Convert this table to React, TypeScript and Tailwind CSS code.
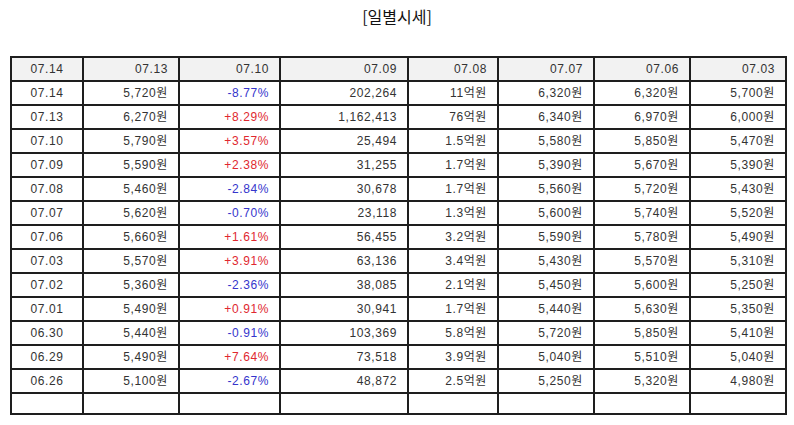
import React from 'react';

type Row = {
  date: string;
  price: string;
  change: string;
  volume: string;
  amount: string;
  open: string;
  high: string;
  low: string;
};

const rows: Row[] = [
  { date: '07.14', price: '5,720원', change: '-8.77%', volume: '202,264', amount: '11억원', open: '6,320원', high: '6,320원', low: '5,700원' },
  { date: '07.13', price: '6,270원', change: '+8.29%', volume: '1,162,413', amount: '76억원', open: '6,340원', high: '6,970원', low: '6,000원' },
  { date: '07.10', price: '5,790원', change: '+3.57%', volume: '25,494', amount: '1.5억원', open: '5,580원', high: '5,850원', low: '5,470원' },
  { date: '07.09', price: '5,590원', change: '+2.38%', volume: '31,255', amount: '1.7억원', open: '5,390원', high: '5,670원', low: '5,390원' },
  { date: '07.08', price: '5,460원', change: '-2.84%', volume: '30,678', amount: '1.7억원', open: '5,560원', high: '5,720원', low: '5,430원' },
  { date: '07.07', price: '5,620원', change: '-0.70%', volume: '23,118', amount: '1.3억원', open: '5,600원', high: '5,740원', low: '5,520원' },
  { date: '07.06', price: '5,660원', change: '+1.61%', volume: '56,455', amount: '3.2억원', open: '5,590원', high: '5,780원', low: '5,490원' },
  { date: '07.03', price: '5,570원', change: '+3.91%', volume: '63,136', amount: '3.4억원', open: '5,430원', high: '5,570원', low: '5,310원' },
  { date: '07.02', price: '5,360원', change: '-2.36%', volume: '38,085', amount: '2.1억원', open: '5,450원', high: '5,600원', low: '5,250원' },
  { date: '07.01', price: '5,490원', change: '+0.91%', volume: '30,941', amount: '1.7억원', open: '5,440원', high: '5,630원', low: '5,350원' },
  { date: '06.30', price: '5,440원', change: '-0.91%', volume: '103,369', amount: '5.8억원', open: '5,720원', high: '5,850원', low: '5,410원' },
  { date: '06.29', price: '5,490원', change: '+7.64%', volume: '73,518', amount: '3.9억원', open: '5,040원', high: '5,510원', low: '5,040원' },
  { date: '06.26', price: '5,100원', change: '-2.67%', volume: '48,872', amount: '2.5억원', open: '5,250원', high: '5,320원', low: '4,980원' },
];

const headers = ['07.14', '07.13', '07.10', '07.09', '07.08', '07.07', '07.06', '07.03'];
const widths = ['w-[72px]', 'w-[96px]', 'w-[101px]', 'w-[128px]', 'w-[90px]', 'w-[96px]', 'w-[96px]', 'w-[96px]'];

const edge = 'border-2 border-[#1e1e1e] py-0 px-[10px]';
const base = `${edge} h-[24px]`;
const right = `${base} text-right`;
const center = `${base} text-center`;

export default function App() {
  return (
    <div className="w-[794px] h-[425px] bg-white text-[#333] font-['Liberation_Sans','Noto_Sans_CJK_KR',sans-serif]">
      <h2 className="pt-[4px] h-[56px] text-center text-[16px] text-[#111] font-['Noto_Sans_CJK_KR',sans-serif]">[일별시세]</h2>
      <table className="ml-[10px] w-[776px] border-collapse table-fixed text-[12px] tracking-[0.6px]">
        <colgroup>
          {widths.map((w, i) => (
            <col key={i} className={w} />
          ))}
        </colgroup>
        <thead>
          <tr className="bg-[#f2f2f2]">
            {headers.map((h, i) => (
              <th key={i} className={`${i === 0 ? center : right} font-normal`}>
                {h}
              </th>
            ))}
          </tr>
        </thead>
        <tbody>
          {rows.map((r) => (
            <tr key={r.date}>
              <td className={center}>{r.date}</td>
              <td className={right}>{r.price}</td>
              <td className={`${right} ${r.change.startsWith('-') ? 'text-[#3535cc]' : 'text-[#e0282f]'}`}>{r.change}</td>
              <td className={right}>{r.volume}</td>
              <td className={right}>{r.amount}</td>
              <td className={right}>{r.open}</td>
              <td className={right}>{r.high}</td>
              <td className={right}>{r.low}</td>
            </tr>
          ))}
          <tr>
            {headers.map((_, i) => (
              <td key={i} className={`${edge} h-[21px]`}></td>
            ))}
          </tr>
        </tbody>
      </table>
    </div>
  );
}
